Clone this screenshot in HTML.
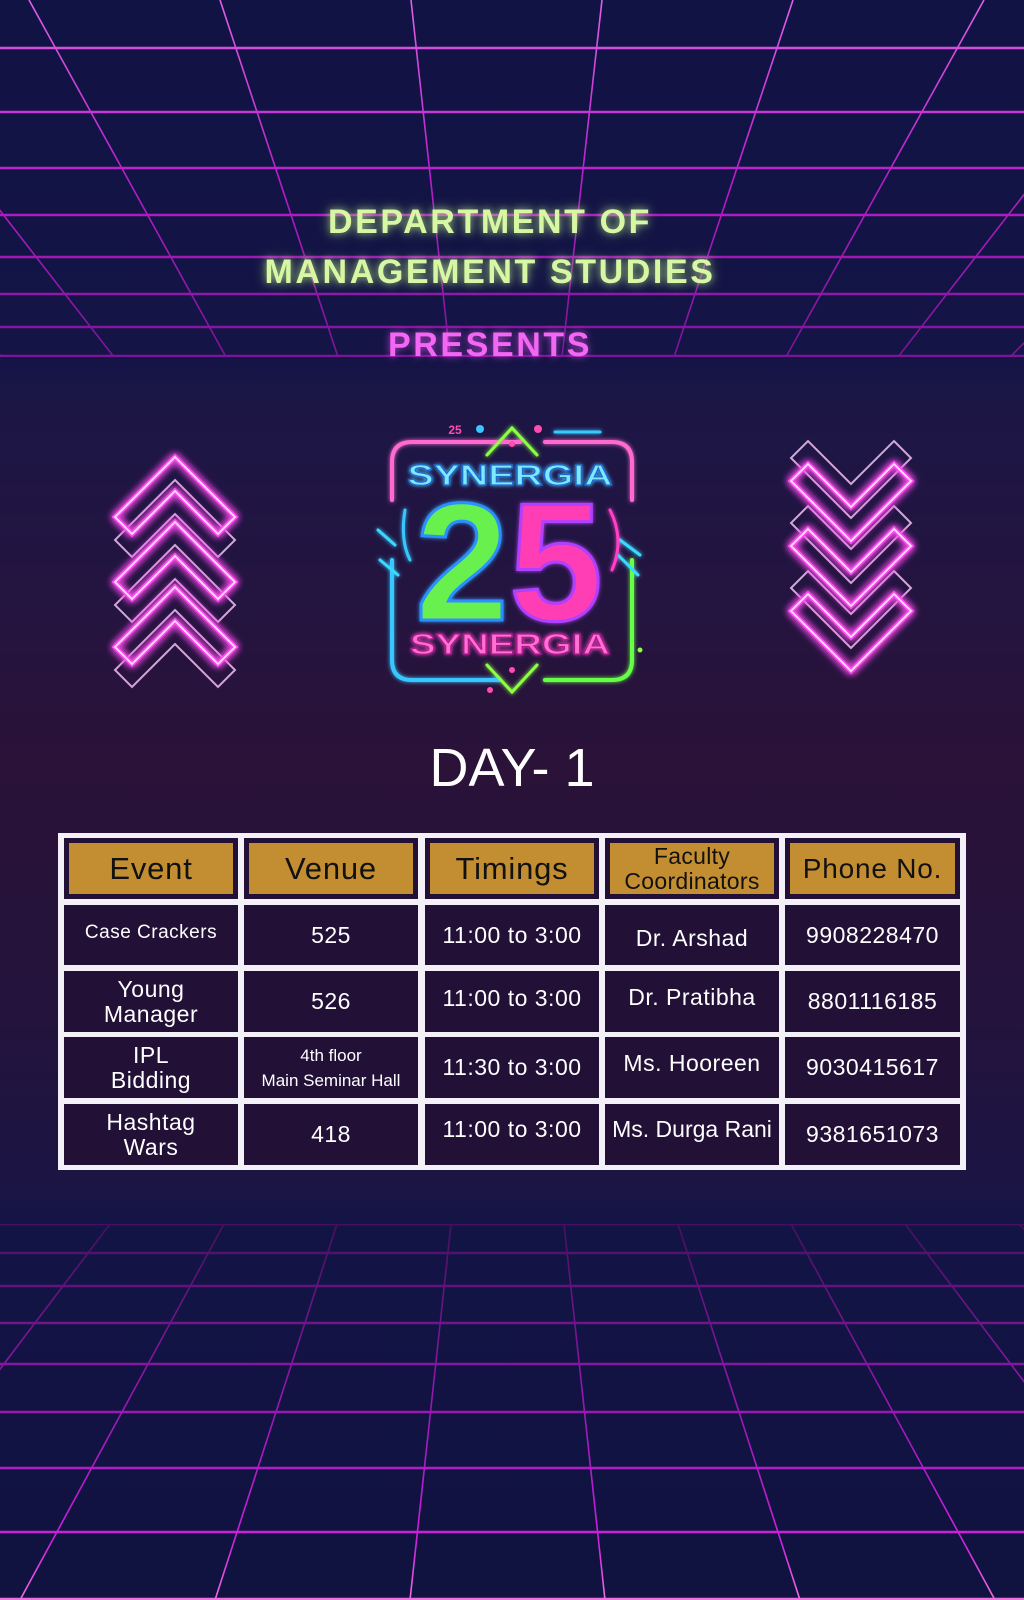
<!DOCTYPE html>
<html><head><meta charset="utf-8"><style>
*{margin:0;padding:0;box-sizing:border-box}
body{width:1024px;height:1600px;overflow:hidden;position:relative;font-family:"Liberation Sans",sans-serif;
background:linear-gradient(180deg,#111344 0px,#141446 356px,#1c1645 400px,#241440 600px,#2a1238 760px,#24133c 1000px,#1b1544 1190px,#131446 1230px,#10123f 1600px);}
.abs{position:absolute}
.t1{position:absolute;left:0;width:980px;text-align:center;color:#d8f7a4;font-weight:bold;font-size:34px;letter-spacing:2.6px;text-shadow:0 0 8px rgba(200,255,140,.7),0 0 16px rgba(200,255,140,.35)}
.cell{position:absolute;background:#221037;color:#fff;display:flex;align-items:center;justify-content:center;text-align:center;font-size:23px;line-height:25px;letter-spacing:0.5px}
.hd{position:absolute;background:#221037;padding:5px}
.hd div{width:100%;height:100%;background:#c38e32;color:#111;display:flex;align-items:center;justify-content:center;text-align:center;font-size:31px;line-height:24px;letter-spacing:0.8px}
</style></head><body>
<svg class="abs" style="left:0;top:0" width="1024" height="1600" viewBox="0 0 1024 1600">
<defs>
<linearGradient id="tg" gradientUnits="userSpaceOnUse" x1="0" y1="0" x2="0" y2="360"><stop offset="0" stop-color="#e060e8"/><stop offset="0.5" stop-color="#b81ec8"/><stop offset="1" stop-color="#7a1496"/></linearGradient>
<linearGradient id="bg2" gradientUnits="userSpaceOnUse" x1="0" y1="1220" x2="0" y2="1600"><stop offset="0" stop-color="#45105c"/><stop offset="0.5" stop-color="#9a18b4"/><stop offset="0.85" stop-color="#d020e0"/><stop offset="1" stop-color="#f070e0"/></linearGradient>
<filter id="glow" x="-30%" y="-30%" width="160%" height="160%"><feGaussianBlur stdDeviation="4" result="b"/><feMerge><feMergeNode in="b"/><feMergeNode in="b"/><feMergeNode in="SourceGraphic"/></feMerge></filter>
<filter id="glow2" x="-20%" y="-20%" width="140%" height="140%"><feGaussianBlur stdDeviation="2" result="b"/><feMerge><feMergeNode in="b"/><feMergeNode in="SourceGraphic"/></feMerge></filter>
<clipPath id="ct"><rect x="0" y="0" width="1024" height="357"/></clipPath>
<clipPath id="cb"><rect x="0" y="1224" width="1024" height="376"/></clipPath>
</defs>
<g stroke="url(#tg)" clip-path="url(#ct)" fill="none">
<g stroke-width="2.5">
<line x1="0" y1="48" x2="1024" y2="48"/><line x1="0" y1="112" x2="1024" y2="112"/><line x1="0" y1="168" x2="1024" y2="168"/><line x1="0" y1="215" x2="1024" y2="215"/><line x1="0" y1="257" x2="1024" y2="257"/><line x1="0" y1="294" x2="1024" y2="294"/><line x1="0" y1="327" x2="1024" y2="327"/><line x1="0" y1="356" x2="1024" y2="356"/>
</g>
<g stroke-width="1.6">
<line x1="-355" y1="0" x2="2" y2="357"/><line x1="-164" y1="0" x2="114" y2="357"/><line x1="29" y1="0" x2="226" y2="357"/><line x1="220" y1="0" x2="338" y2="357"/><line x1="411" y1="0" x2="450" y2="357"/><line x1="602" y1="0" x2="562" y2="357"/><line x1="793" y1="0" x2="674" y2="357"/><line x1="984" y1="0" x2="786" y2="357"/><line x1="1175" y1="0" x2="898" y2="357"/><line x1="1366" y1="0" x2="1010" y2="357"/>
</g></g>
<g stroke="url(#bg2)" clip-path="url(#cb)" fill="none">
<g stroke-width="2.5">
<line x1="0" y1="1224" x2="1024" y2="1224"/><line x1="0" y1="1253" x2="1024" y2="1253"/><line x1="0" y1="1286" x2="1024" y2="1286"/><line x1="0" y1="1323" x2="1024" y2="1323"/><line x1="0" y1="1364" x2="1024" y2="1364"/><line x1="0" y1="1412" x2="1024" y2="1412"/><line x1="0" y1="1468" x2="1024" y2="1468"/><line x1="0" y1="1532" x2="1024" y2="1532"/><line x1="0" y1="1599" x2="1024" y2="1599"/>
</g>
<g stroke-width="1.6">
<line x1="-4" y1="1224" x2="-369" y2="1600"/><line x1="110" y1="1224" x2="-175" y2="1600"/><line x1="224" y1="1224" x2="20" y2="1600"/><line x1="337" y1="1224" x2="215" y2="1600"/><line x1="451" y1="1224" x2="410" y2="1600"/><line x1="564" y1="1224" x2="605" y2="1600"/><line x1="678" y1="1224" x2="800" y2="1600"/><line x1="791" y1="1224" x2="995" y2="1600"/><line x1="905" y1="1224" x2="1189" y2="1600"/><line x1="1019" y1="1224" x2="1384" y2="1600"/>
</g></g>

<g id="chev" fill="none">
<g stroke="#f4c0f4" stroke-width="2" opacity="0.85">
<polygon points="175,480 235,540 218,557 175,514 132,557 115,540"/>
<polygon points="175,545 235,605 218,622 175,579 132,622 115,605"/>
<polygon points="175,610 235,670 218,687 175,644 132,687 115,670"/>
</g>
<g stroke="#ff4cf0" stroke-width="5" filter="url(#glow)">
<polygon points="175,457 235,517 218,534 175,491 132,534 115,517"/>
<polygon points="175,522 235,582 218,599 175,556 132,599 115,582"/>
<polygon points="175,587 235,647 218,664 175,621 132,664 115,647"/>
</g>
<g stroke="#ffe0ff" stroke-width="1.8">
<polygon points="175,457 235,517 218,534 175,491 132,534 115,517"/>
<polygon points="175,522 235,582 218,599 175,556 132,599 115,582"/>
<polygon points="175,587 235,647 218,664 175,621 132,664 115,647"/>
</g>
</g>
<use href="#chev" transform="translate(1026,1128) scale(-1,-1)"/>

<g fill="none" stroke-linecap="round" filter="url(#glow2)">
<path d="M392,500 V462 Q392,442 412,442 H520" stroke="#ff6ad0" stroke-width="4"/>
<path d="M545,442 H612 Q632,442 632,462 V500" stroke="#ff6ad0" stroke-width="4"/>
<path d="M632,560 V660 Q632,680 612,680 H545" stroke="#66ff44" stroke-width="4"/>
<path d="M392,560 V660 Q392,680 412,680 H500" stroke="#38c8ff" stroke-width="4"/>
<path d="M487,455 L512,428 L537,455" stroke="#8cff40" stroke-width="3"/>
<path d="M487,665 L512,692 L537,665" stroke="#8cff40" stroke-width="3"/>
<path d="M555,432 H600" stroke="#38c8ff" stroke-width="3"/>
<path d="M378,530 L395,545 M380,560 L398,575" stroke="#38d8ff" stroke-width="3"/>
<path d="M620,540 L640,555 M618,555 L638,575" stroke="#38d8ff" stroke-width="3"/>
<path d="M405,510 Q400,540 410,560" stroke="#38c8ff" stroke-width="3"/>
<path d="M610,510 Q625,540 612,570" stroke="#ff40c8" stroke-width="3"/>
</g>
<circle cx="480" cy="429" r="4" fill="#38c8ff"/><circle cx="538" cy="429" r="4" fill="#ff4cae"/>
<circle cx="512" cy="444" r="3" fill="#ff4cae"/><circle cx="512" cy="670" r="3" fill="#ff4cae"/>
<circle cx="490" cy="690" r="3" fill="#ff4cae"/><circle cx="640" cy="650" r="2.5" fill="#8cff40"/>
<text x="455" y="434" font-family="Liberation Sans" font-weight="bold" font-size="12" fill="#ff4cae" text-anchor="middle">25</text>
<text x="510" y="485" font-family="Liberation Sans" font-weight="bold" font-size="29" fill="#7ee8ff" stroke="#1a6cd0" stroke-width="1.2" text-anchor="middle" textLength="205" lengthAdjust="spacingAndGlyphs" filter="url(#glow2)">SYNERGIA</text>
<text x="462" y="620" font-family="Liberation Sans" font-weight="bold" font-size="168" fill="#68f050" stroke="#2a90ff" stroke-width="3" text-anchor="middle" filter="url(#glow2)">2</text>
<text x="556" y="620" font-family="Liberation Sans" font-weight="bold" font-size="168" fill="#ff3cb4" stroke="#b040ff" stroke-width="3" text-anchor="middle" filter="url(#glow2)">5</text>
<text x="510" y="654" font-family="Liberation Sans" font-weight="bold" font-size="29" fill="#ff70d0" stroke="#b01890" stroke-width="1.2" text-anchor="middle" textLength="200" lengthAdjust="spacingAndGlyphs" filter="url(#glow2)">SYNERGIA</text>
</svg>

<div class="t1" style="top:203px">DEPARTMENT OF</div>
<div class="t1" style="top:253px">MANAGEMENT STUDIES</div>
<div class="t1" style="top:326px;color:#f466f4;text-shadow:0 0 8px rgba(255,90,255,.7)">PRESENTS</div>
<div class="abs" style="left:0;width:1024px;top:740px;text-align:center;color:#fff;font-size:54px;line-height:56px">DAY- 1</div>

<div class="abs" style="left:58px;top:833px;width:908px;height:337px;background:#f4f0f8"></div>
<div class="hd" style="left:64px;top:838px;width:174px;height:61px"><div>Event</div></div>
<div class="hd" style="left:244px;top:838px;width:174px;height:61px"><div>Venue</div></div>
<div class="hd" style="left:425px;top:838px;width:174px;height:61px"><div>Timings</div></div>
<div class="hd" style="left:605px;top:838px;width:174px;height:61px"><div style="font-size:23px;line-height:25px;letter-spacing:0.3px">Faculty<br>Coordinators</div></div>
<div class="hd" style="left:785px;top:838px;width:175px;height:61px"><div style="font-size:28px">Phone No.</div></div>

<div class="cell" style="left:64px;top:905px;width:174px;height:60px;font-size:19px;padding-bottom:6px">Case Crackers</div>
<div class="cell" style="left:244px;top:905px;width:174px;height:60px">525</div>
<div class="cell" style="left:425px;top:905px;width:174px;height:60px">11:00 to 3:00</div>
<div class="cell" style="left:605px;top:905px;width:174px;height:60px;padding-top:6px">Dr. Arshad</div>
<div class="cell" style="left:785px;top:905px;width:175px;height:60px">9908228470</div>

<div class="cell" style="left:64px;top:971px;width:174px;height:61px">Young<br>Manager</div>
<div class="cell" style="left:244px;top:971px;width:174px;height:61px">526</div>
<div class="cell" style="left:425px;top:971px;width:174px;height:61px;padding-bottom:6px">11:00 to 3:00</div>
<div class="cell" style="left:605px;top:971px;width:174px;height:61px;padding-bottom:8px">Dr. Pratibha</div>
<div class="cell" style="left:785px;top:971px;width:175px;height:61px">8801116185</div>

<div class="cell" style="left:64px;top:1037px;width:174px;height:61px">IPL<br>Bidding</div>
<div class="cell" style="left:244px;top:1037px;width:174px;height:61px;font-size:17px;line-height:25px;letter-spacing:0">4th floor<br>Main Seminar Hall</div>
<div class="cell" style="left:425px;top:1037px;width:174px;height:61px">11:30 to 3:00</div>
<div class="cell" style="left:605px;top:1037px;width:174px;height:61px;padding-bottom:8px">Ms. Hooreen</div>
<div class="cell" style="left:785px;top:1037px;width:175px;height:61px">9030415617</div>

<div class="cell" style="left:64px;top:1104px;width:174px;height:61px">Hashtag<br>Wars</div>
<div class="cell" style="left:244px;top:1104px;width:174px;height:61px">418</div>
<div class="cell" style="left:425px;top:1104px;width:174px;height:61px;padding-bottom:10px">11:00 to 3:00</div>
<div class="cell" style="left:605px;top:1104px;width:174px;height:61px;padding-bottom:10px;letter-spacing:0">Ms. Durga Rani</div>
<div class="cell" style="left:785px;top:1104px;width:175px;height:61px">9381651073</div>
</body></html>
